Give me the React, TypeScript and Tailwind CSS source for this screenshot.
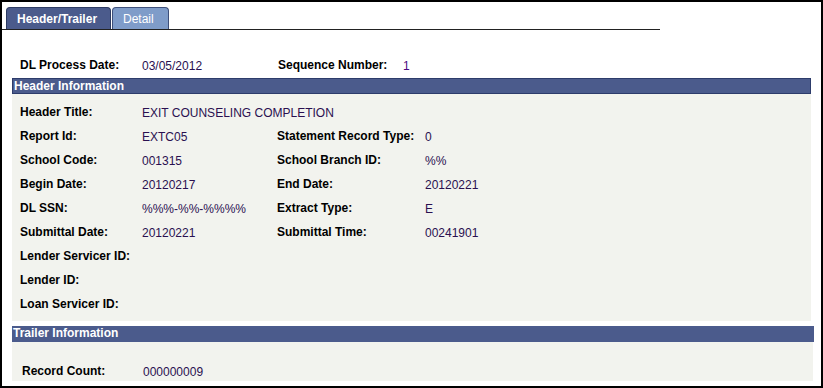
import React from "react";

const font = { fontFamily: '"Liberation Sans", Arial, sans-serif' };

type Field = { label: string; value?: string };

const rows: [Field, Field?][] = [
  [{ label: "Header Title:", value: "EXIT COUNSELING COMPLETION" }],
  [{ label: "Report Id:", value: "EXTC05" }, { label: "Statement Record Type:", value: "0" }],
  [{ label: "School Code:", value: "001315" }, { label: "School Branch ID:", value: "%%" }],
  [{ label: "Begin Date:", value: "20120217" }, { label: "End Date:", value: "20120221" }],
  [{ label: "DL SSN:", value: "%%%-%%-%%%%" }, { label: "Extract Type:", value: "E" }],
  [{ label: "Submittal Date:", value: "20120221" }, { label: "Submittal Time:", value: "00241901" }],
  [{ label: "Lender Servicer ID:" }],
  [{ label: "Lender ID:" }],
  [{ label: "Loan Servicer ID:" }],
];

function App() {
  return (
    <div
      className="w-[823px] h-[388px] bg-white border-2 border-black text-[12px] text-black flex flex-col overflow-hidden"
      style={font}
    >
      {/* Tabs */}
      <div className="flex items-end pl-[4px] pt-[5px] w-[658px] border-b border-[#222]">
        <div className="h-[22px] w-[105px] pl-[10px] flex items-center bg-[#4b5b8c] border border-b-0 border-[#2c3a62] rounded-t-[4px] text-white font-bold">
          Header/Trailer
        </div>
        <div className="h-[22px] w-[57px] ml-[1px] pl-[10px] flex items-center bg-[#7f9cc9] border border-b-0 border-[#3d4f7a] rounded-t-[4px] text-white">
          Detail
        </div>
      </div>

      {/* Top row */}
      <div className="flex items-center h-[18px] mt-[26px] pl-[18px]">
        <span className="w-[122px] font-bold">DL Process Date:</span>
        <span className="w-[136px] text-[#2a1050] pt-[2px]">03/05/2012</span>
        <span className="w-[125px] font-bold">Sequence Number:</span>
        <span className="text-[#4a0a80] pt-[2px]">1</span>
      </div>

      {/* Header information */}
      <div className="ml-[10px] w-[799px] mt-[4px]">
        <div className="h-[16px] bg-[#4b5b8c] border border-[#2d3c6b] text-white font-bold leading-[14px] pl-[1px]">
          Header Information
        </div>
        <div className="bg-[#f2f3ee] pt-[6px] pb-[5px] pl-[8px]">
          {rows.map(([a, b], i) => (
            <div key={i} className="grid grid-cols-[122px_135px_148px_1fr] h-[24px] items-center">
              <span className="font-bold">{a.label}</span>
              <span className={`text-[#2a1050] pt-[2px] whitespace-nowrap ${b ? "" : "col-span-3"}`}>{a.value ?? ""}</span>
              {b && <span className="font-bold">{b.label}</span>}
              {b && <span className="text-[#2a1050] pt-[2px]">{b.value}</span>}
            </div>
          ))}
        </div>
      </div>

      {/* Trailer information */}
      <div className="ml-[10px] w-[802px] mt-[5px]">
        <div className="h-[16px] bg-[#4b5b8c] text-white font-bold leading-[15px] pl-[1px]">
          Trailer Information
        </div>
        <div className="bg-[#f2f3ee] w-[801px] h-[39px] pt-[20px] pl-[10px]">
          <div className="flex items-center h-[18px]">
            <span className="w-[121px] font-bold">Record Count:</span>
            <span className="text-[#2a1050] pt-[2px]">000000009</span>
          </div>
        </div>
      </div>
    </div>
  );
}

export default App;
